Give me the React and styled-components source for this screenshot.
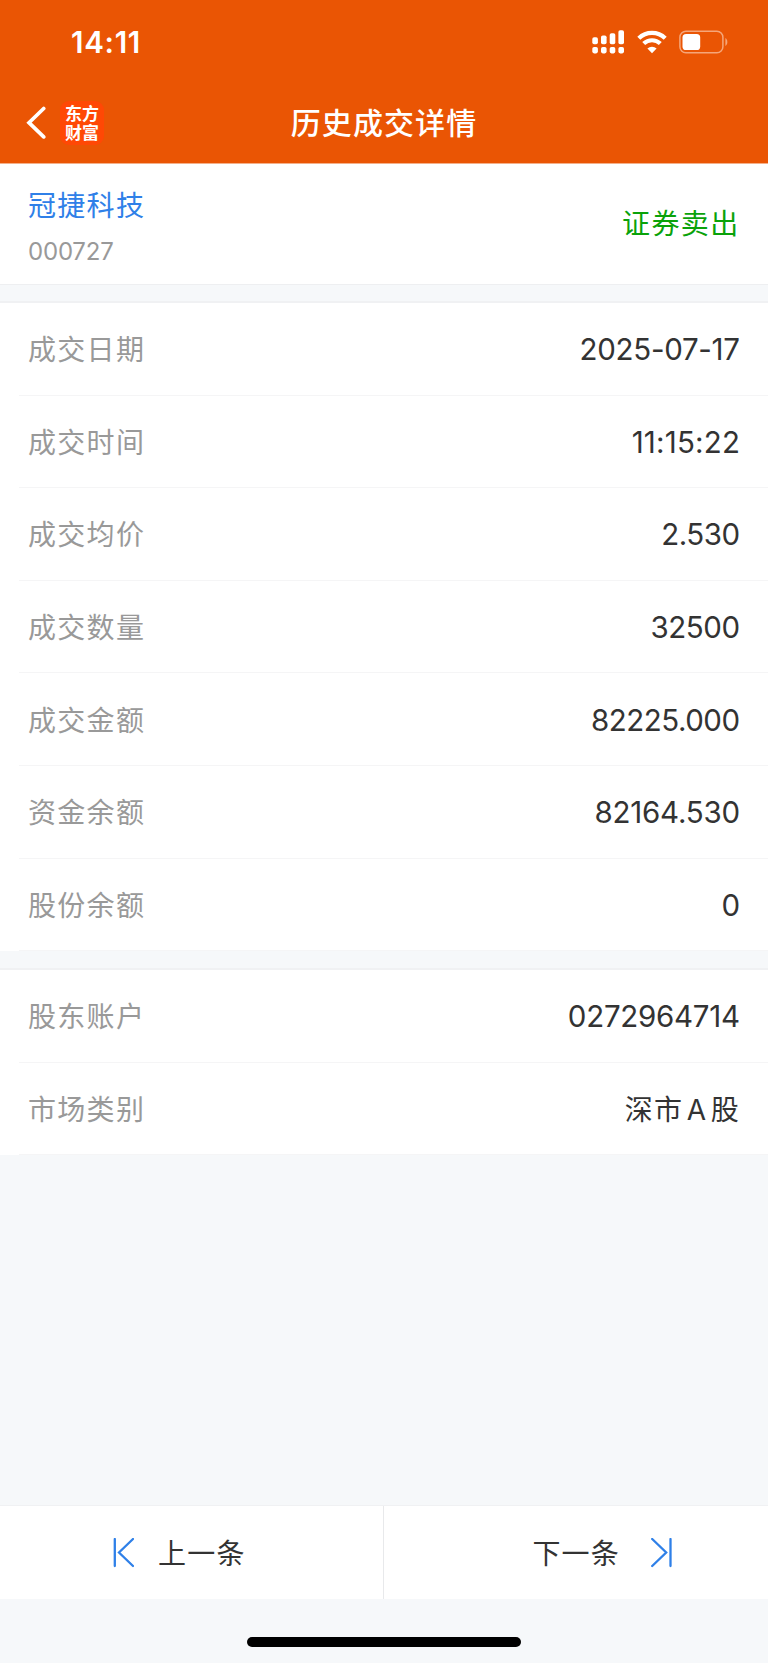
import React from 'react';
import styled, { createGlobalStyle } from 'styled-components';

const GlobalStyle = createGlobalStyle`
    * {
        box-sizing: border-box;
    }

    body {
        margin: 0;
        background-color: #f6f8fa;
        font-family: Inter, 'Noto Sans CJK SC', sans-serif;
    }
`;

const Page = styled.div`
    width: 768px;
    height: 1663px;
    display: flex;
    flex-direction: column;
    overflow: hidden;
    background-color: #f6f8fa;
    color: #333333;
`;

const Header = styled.header`
    height: 164px;
    flex-shrink: 0;
    background-color: #ea5504;
    border-bottom: 1px solid #f4b08a;
    color: white;
`;

const StatusBar = styled.div`
    height: 84px;
    padding: 0 40px 0 71px;
    display: flex;
    align-items: center;
    justify-content: space-between;
`;

const Clock = styled.span`
    font-weight: 600;
    font-size: 29.5px;
    line-height: 32px;
    letter-spacing: 0.7px;
`;

const StatusIcons = styled.div`
    display: flex;
    align-items: center;
    gap: 12px;

    svg {
        display: block;
    }
`;

const NavBar = styled.div`
    height: 78px;
    padding: 0 26px;
    display: grid;
    grid-template-columns: 1fr auto 1fr;
    align-items: center;
`;

const NavLeft = styled.div`
    display: flex;
    align-items: center;
    gap: 14px;
`;

const Logo = styled.div`
    width: 44px;
    height: 44px;
    padding: 2px 5px 0;
    border-radius: 9px;
    background-color: #ff4805;
    font-family: 'Noto Sans CJK SC', sans-serif;
    font-weight: 700;
    font-size: 17px;
    line-height: 19px;
    word-break: break-all;
`;

const Title = styled.h1`
    margin: 0;
    font-weight: 500;
    font-size: 30px;
    line-height: 40px;
    letter-spacing: 1.1px;
`;

const Summary = styled.section`
    height: 121px;
    flex-shrink: 0;
    padding: 0 29px 0 28px;
    display: flex;
    align-items: center;
    justify-content: space-between;
    background-color: white;
    border-bottom: 1px solid #eeeff1;
`;

const Stock = styled.div`
    padding-top: 5px;
    display: flex;
    flex-direction: column;
    gap: 12px;
`;

const StockName = styled.span`
    font-size: 28px;
    line-height: 38px;
    letter-spacing: 1.3px;
    color: #2f80e8;
`;

const StockCode = styled.span`
    font-size: 24px;
    line-height: 30px;
    letter-spacing: -0.2px;
    color: #999999;
`;

const Side = styled.span`
    font-size: 28px;
    line-height: 38px;
    letter-spacing: 1.4px;
    margin-right: -0.6px;
    color: #0aa20a;
`;

const Group = styled.section`
    margin-top: ${(props) => props.$gap}px;
    flex-shrink: 0;
    background-color: white;
    border-top: 2px solid #f0f1f3;
`;

const Row = styled.div`
    height: 92.6px;
    margin-left: 19px;
    padding: ${(props) => props.$shift || 0}px 28px 0 9px;
    display: flex;
    align-items: center;
    justify-content: space-between;
    border-bottom: 1px solid #f5f5f6;
`;

const Label = styled.span`
    padding-top: 2px;
    font-size: 28px;
    line-height: 40px;
    letter-spacing: 1.3px;
    color: #999999;
`;

const Value = styled.span`
    font-size: 29.5px;
    line-height: 40px;
    letter-spacing: ${(props) => props.$spacing || 0}px;
    margin-right: ${(props) => -(props.$spacing || 0)}px;
`;

const TextValue = styled(Value)`
    padding-top: 2px;
    margin-right: 0;
    font-size: 28px;
`;

const Latin = styled.span`
    margin: 0 3.5px;
`;

const Footer = styled.footer`
    height: 94px;
    margin-top: auto;
    flex-shrink: 0;
    display: grid;
    grid-template-columns: 384px 384px;
    background-color: white;
    border-top: 1px solid #f0f1f3;
`;

const FooterButton = styled.button`
    padding: ${(props) => props.$padding};
    display: flex;
    align-items: center;
    justify-content: ${(props) => (props.$next ? 'flex-end' : 'flex-start')};
    gap: ${(props) => (props.$next ? 31 : 24)}px;
    border: 0;
    border-right: ${(props) => (props.$next ? '0' : '1px solid #e8e9eb')};
    background: none;
    font-family: inherit;
    font-size: 28px;
    line-height: 40px;
    letter-spacing: 1.2px;
    color: #333333;

    span {
        padding-top: 2px;
    }
`;

const HomeArea = styled.div`
    height: 64px;
    flex-shrink: 0;
    padding-top: 38px;
    display: flex;
    justify-content: center;
`;

const HomeBar = styled.div`
    width: 274px;
    height: 10px;
    border-radius: 5px;
    background-color: black;
`;

const tradeRows = [
    { label: '成交日期', value: '2025-07-17', spacing: -0.3 },
    { label: '成交时间', value: '11:15:22', spacing: 0.2 },
    { label: '成交均价', value: '2.530', spacing: -0.5 },
    { label: '成交数量', value: '32500', spacing: -0.45 },
    { label: '成交金额', value: '82225.000', spacing: -0.5 },
    { label: '资金余额', value: '82164.530', spacing: -0.25 },
    { label: '股份余额', value: '0' },
];

const SignalIcon = () => (
    <svg width="33" height="24" viewBox="0 0 33 24" fill="white">
        {[7.3, 5.5, 3.2, 0.3].map((top, i) => (
            <g key={top}>
                <rect x={i * 8.7 + 0.3} y={top} width="5.6" height={14.2 - top} rx="1.8" />
                <rect x={i * 8.7 + 0.3} y="17" width="5.6" height="6.4" rx="1.8" />
            </g>
        ))}
    </svg>
);

const WifiIcon = () => (
    <svg width="30" height="24" viewBox="0 0 30 24" fill="none">
        <path d="M1.8 8.3a19 19 0 0 1 26.4 0" stroke="white" strokeWidth="4.3" />
        <path d="M6.7 13.6a12 12 0 0 1 16.6 0" stroke="white" strokeWidth="4.2" />
        <path d="M15 23.3 10.4 18.6a6.5 6.5 0 0 1 9.2 0Z" fill="white" />
    </svg>
);

const BatteryIcon = () => (
    <svg width="49" height="24" viewBox="0 0 49 24" fill="none">
        <rect x="0.9" y="1.3" width="43" height="21.4" rx="6" stroke="#f5a67a" strokeWidth="1.5" />
        <rect x="3.5" y="4" width="17.7" height="16" rx="3.6" fill="white" />
        <path d="M46.4 8c2.6 1.6 2.6 6.4 0 8Z" fill="#f5a67a" />
    </svg>
);

const BackIcon = () => (
    <svg width="20" height="34" viewBox="0 0 20 34" fill="none">
        <path d="M17.7 2.5 3 16.7l14.7 14.2" stroke="white" strokeWidth="3.7" strokeLinecap="round" />
    </svg>
);

const PrevIcon = () => (
    <svg width="22" height="30" viewBox="0 0 22 30" fill="none" stroke="#2f80e8" strokeWidth="2.3" strokeLinecap="round">
        <path d="M2.8 1v27M21 1 7 14.5 21 28" />
    </svg>
);

const NextIcon = () => (
    <svg width="22" height="30" viewBox="0 0 22 30" fill="none" stroke="#2f80e8" strokeWidth="2.3" strokeLinecap="round">
        <path d="M19.5 1v27M1.2 1l14 13.5L1.2 28" />
    </svg>
);

const App = () => {
    return (
        <Page>
            <GlobalStyle />
            <Header>
                <StatusBar>
                    <Clock>14:11</Clock>
                    <StatusIcons>
                        <SignalIcon />
                        <WifiIcon />
                        <BatteryIcon />
                    </StatusIcons>
                </StatusBar>
                <NavBar>
                    <NavLeft>
                        <BackIcon />
                        <Logo>东方财富</Logo>
                    </NavLeft>
                    <Title>历史成交详情</Title>
                </NavBar>
            </Header>
            <Summary>
                <Stock>
                    <StockName>冠捷科技</StockName>
                    <StockCode>000727</StockCode>
                </Stock>
                <Side>证券卖出</Side>
            </Summary>
            <Group $gap={16}>
                {tradeRows.map((row) => (
                    <Row key={row.label} $shift={1}>
                        <Label>{row.label}</Label>
                        <Value $spacing={row.spacing}>{row.value}</Value>
                    </Row>
                ))}
            </Group>
            <Group $gap={17}>
                <Row>
                    <Label>股东账户</Label>
                    <Value $spacing={-0.28}>0272964714</Value>
                </Row>
                <Row>
                    <Label>市场类别</Label>
                    <TextValue $spacing={1.2}>
                        深市<Latin>A</Latin>股
                    </TextValue>
                </Row>
            </Group>
            <Footer>
                <FooterButton $padding="0 0 0 112px">
                    <PrevIcon />
                    <span>上一条</span>
                </FooterButton>
                <FooterButton $next $padding="0 95px 0 0">
                    <span>下一条</span>
                    <NextIcon />
                </FooterButton>
            </Footer>
            <HomeArea>
                <HomeBar />
            </HomeArea>
        </Page>
    );
};

export default App;
